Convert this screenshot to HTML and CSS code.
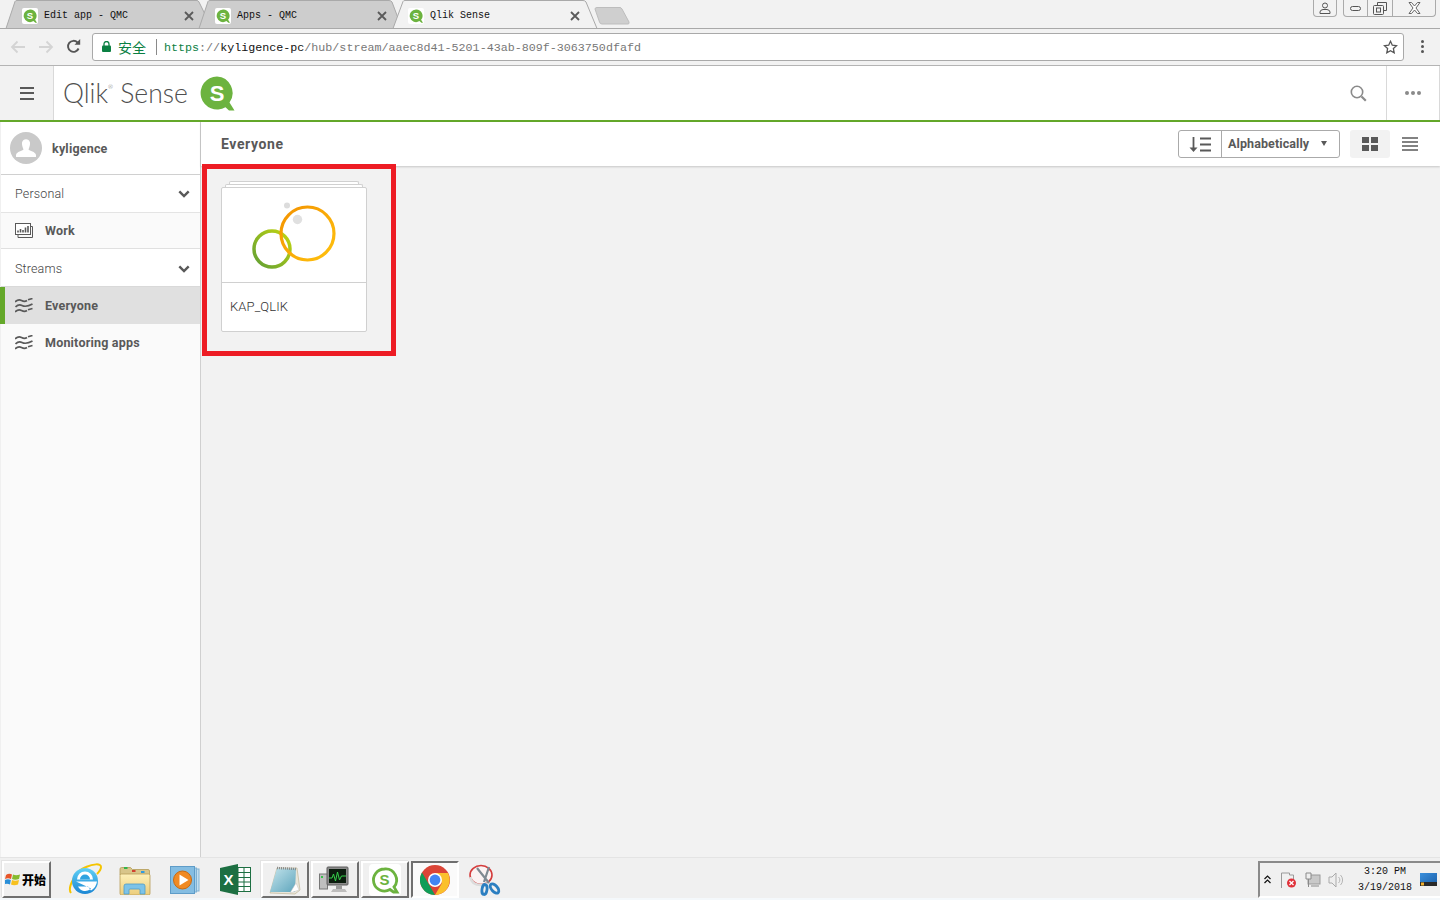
FILE: index.html
```html
<!DOCTYPE html>
<html lang="en">
<head>
<meta charset="utf-8">
<title>Qlik Sense</title>
<link rel="stylesheet" href="styles.css">
</head>
<body>
<svg class="sprite" aria-hidden="true">
  <defs>
    <symbol id="fav" viewBox="0 0 16 16">
      <rect width="16" height="16" rx="2" fill="#fff"/>
      <path d="M8 1.5a6.3 6.3 0 1 0 3.4 11.6l2 1.7h1.6l-1.9-3A6.3 6.3 0 0 0 8 1.5z" fill="#6cb33f"/>
      <text x="8" y="11" text-anchor="middle" class="fav-s">S</text>
    </symbol>
    <symbol id="close" viewBox="0 0 10 10">
      <path d="M1 1l8 8M9 1l-8 8" stroke="#5a5a5a" stroke-width="1.8" fill="none"/>
    </symbol>
    <symbol id="waves" viewBox="0 0 18 15">
      <path d="M0 4c2.500-2.500 4.500-2.500 6.500-1.500s4 1 5.500 0 M13 1.800l4.500-1.300 M.5 9c2.500-2.500 4.500-2.500 6.500-1.500s6 1 10.500-1.500 M0 14c2.500-2.500 4.500-2.500 6.500-1.500s4 1 5.500 0 M13 11.800l4.500-1.300" stroke="#595959" stroke-width="1.700" fill="none"/>
    </symbol>
    <symbol id="chev" viewBox="0 0 12 8">
      <path d="M1.300 1.300L6 6l4.700-4.700" stroke="#595959" stroke-width="2.400" fill="none"/>
    </symbol>
    <linearGradient id="greenring" x1="0" y1="1" x2="1" y2="0">
      <stop offset="0" stop-color="#5f9e35"/><stop offset="1" stop-color="#c3d60f"/>
    </linearGradient>
    <linearGradient id="orangering" x1="0" y1="0" x2="1" y2="1">
      <stop offset="0" stop-color="#f39200"/><stop offset="1" stop-color="#ffc20e"/>
    </linearGradient>
    <linearGradient id="ieblue" x1="0" y1="0" x2="0" y2="1">
      <stop offset="0" stop-color="#5fd0f5"/><stop offset="1" stop-color="#1b86d4"/>
    </linearGradient>
    <linearGradient id="folder" x1="0" y1="0" x2="0" y2="1">
      <stop offset="0" stop-color="#fdf0b8"/><stop offset="1" stop-color="#eccd7c"/>
    </linearGradient>
    <linearGradient id="pad" x1="0" y1="0" x2="1" y2="1">
      <stop offset="0" stop-color="#c4e4ec"/><stop offset="1" stop-color="#5fa6bd"/>
    </linearGradient>
    <linearGradient id="desk" x1="0" y1="0" x2="1" y2="1">
      <stop offset="0" stop-color="#3a8fdc"/><stop offset="1" stop-color="#1a5ea8"/>
    </linearGradient>
  </defs>
</svg>

<header class="tabstrip">
  <svg class="tabshapes" width="640" height="29" viewBox="0 0 640 29" aria-hidden="true">
    <path d="M6 28.500L15 1.500Q15.500.500 17 .500H197Q198 .500 199 2L212 28.500Z" fill="#cdcdcd" stroke="#a9a9a9"/>
    <path d="M199 28.500L208 1.500Q208.500.500 210 .500H389Q391 .500 392 2L402 28.500Z" fill="#cdcdcd" stroke="#a9a9a9"/>
    <path d="M393 28.500L403 1.500Q403.500.500 405 .500H583Q585 .500 586 2L597 28.500Z" fill="#f2f2f2" stroke="#a9a9a9"/>
    <path d="M595 9Q595 7.500 597 7.500H620Q621 7.500 622 9L629 22Q629.500 24 628 24H602Q600 24 599.500 22Z" fill="#cfcfcf" stroke="#bdbdbd"/>
  </svg>
  <div class="tab">
    <svg class="fav"><use href="#fav"/></svg>
    <span class="tab-title">Edit app - QMC</span>
    <svg class="tab-x"><use href="#close"/></svg>
  </div>
  <div class="tab">
    <svg class="fav"><use href="#fav"/></svg>
    <span class="tab-title">Apps - QMC</span>
    <svg class="tab-x"><use href="#close"/></svg>
  </div>
  <div class="tab">
    <svg class="fav"><use href="#fav"/></svg>
    <span class="tab-title">Qlik Sense</span>
    <svg class="tab-x"><use href="#close"/></svg>
  </div>
  <div class="winctl">
    <div class="winbtn winbtn-user">
      <svg width="12" height="12" viewBox="0 0 12 12"><circle cx="6" cy="3.500" r="2.500" fill="none" stroke="#555"/><path d="M1 11.500V10q0-2 3-2.500h4q3 .5 3 2.500v1.500z" fill="none" stroke="#555"/></svg>
    </div>
    <div class="wingroup">
      <div class="winbtn winbtn-min"><svg width="13" height="8" viewBox="0 0 13 8"><rect x="1.500" y="2.500" width="10" height="4" rx="2" fill="none" stroke="#555"/></svg></div>
      <div class="winbtn winbtn-max"><svg width="14" height="13" viewBox="0 0 14 13"><path d="M4.500 3V.5h9v8H11" fill="none" stroke="#555"/><rect x=".5" y="3.500" width="10" height="9" rx="1" fill="none" stroke="#555"/><rect x="3.500" y="6" width="4" height="4" fill="none" stroke="#555"/></svg></div>
      <div class="winbtn winbtn-close"><svg width="13" height="12" viewBox="0 0 13 12"><path d="M1 .5h2.500L6.500 4l3-3.500H12L8 6l4 5.500H9.500l-3-3.500-3 3.500H1L5 6z" fill="#fff" stroke="#666"/></svg></div>
    </div>
  </div>
</header>

<nav class="toolbar">
  <svg class="navicon" width="16" height="14" viewBox="0 0 16 14"><path d="M15 7H2M7.500 1.500L2 7l5.500 5.500" stroke="#d4d4d4" stroke-width="1.800" fill="none"/></svg>
  <svg class="navicon" width="16" height="14" viewBox="0 0 16 14"><path d="M1 7h13M8.500 1.500L14 7l-5.500 5.500" stroke="#d4d4d4" stroke-width="1.800" fill="none"/></svg>
  <svg class="navicon" width="15" height="15" viewBox="0 0 15 15"><path d="M12.600 9.500A5.500 5.500 0 1 1 11.500 3.500" stroke="#555" stroke-width="1.900" fill="none"/><path d="M8.500 5.800h5.700V0z" fill="#555"/></svg>
  <div class="addr">
    <svg class="lock" width="9" height="11" viewBox="0 0 9 11"><path d="M2 5V3a2.500 2.500 0 0 1 5 0v2" stroke="#0b8043" stroke-width="1.300" fill="none"/><rect y="4.500" width="9" height="6.500" rx="1" fill="#0b8043"/></svg>
    <span class="secure">安全</span>
    <span class="addr-sep"></span>
    <span class="url"><span class="url-https">https</span><span class="url-path">://</span><span class="url-host">kyligence-pc</span><span class="url-path">/hub/stream/aaec8d41-5201-43ab-809f-3063750dfafd</span></span>
    <svg class="star" width="15" height="14" viewBox="0 0 15 14"><path d="M7.500 1.300l1.800 3.900 4.200.5-3.100 2.900.8 4.200-3.700-2.100-3.700 2.100.8-4.200L1.500 5.700l4.200-.5z" fill="none" stroke="#555" stroke-width="1.300"/></svg>
  </div>
  <div class="kebab"><i></i><i></i><i></i></div>
</nav>

<header class="qs-header">
  <div class="burger"><i></i><i></i><i></i></div>
  <div class="logo">
    <span class="logo-text">Qlik<sup class="reg">®</sup> Sense</span>
    <svg class="logo-mark" width="35" height="35" viewBox="0 0 35 35">
      <path d="M17 .5a16.500 16.500 0 1 0 8.500 30.700l3.500 3.300h5.500l-5-8A16.500 16.500 0 0 0 17 .5z" fill="#6cb33f"/>
      <text x="17" y="24.500" text-anchor="middle" class="logo-s">S</text>
    </svg>
  </div>
  <div class="qs-right">
    <svg class="qs-search" width="17" height="17" viewBox="0 0 17 17"><circle cx="7" cy="7" r="5.700" fill="none" stroke="#8a8a8a" stroke-width="1.600"/><path d="M11.500 11.500l4.300 4.300" stroke="#8a8a8a" stroke-width="2.200"/></svg>
    <div class="qs-more"><i></i><i></i><i></i></div>
  </div>
</header>

<div class="main">
  <aside class="sidebar">
    <div class="user">
      <svg class="avatar" width="32" height="32" viewBox="0 0 32 32"><circle cx="16" cy="16" r="16" fill="#c9c9c9"/><path d="M12 10.500a4.300 5 0 0 1 8 0c.3 3-1 5.500-1.500 7 1 1.500 7 2 7.500 5.500v2H6v-2c.5-3.500 6.500-4 7.500-5.500-.5-1.500-1.800-4-1.500-7z" fill="#fff"/></svg>
      <span class="user-name">kyligence</span>
    </div>
    <div class="sec sec-personal"><span>Personal</span><svg class="chev"><use href="#chev"/></svg></div>
    <div class="item item-work">
      <svg class="item-icon" width="18" height="15" viewBox="0 0 18 15"><path d="M15.500 3.500h2v11H3V11.500" fill="none" stroke="#595959"/><rect x=".5" y=".5" width="15" height="11" fill="#fff" stroke="#595959"/><path d="M3 9.500V7.500M5.500 9.500V6M8 9.500V7M10.500 9.500V4.500M13 9.500V3" stroke="#595959" stroke-width="1.600"/></svg>
      <span>Work</span>
    </div>
    <div class="sec sec-streams"><span>Streams</span><svg class="chev"><use href="#chev"/></svg></div>
    <div class="item item-active"><svg class="item-icon wave"><use href="#waves"/></svg><span>Everyone</span></div>
    <div class="item"><svg class="item-icon wave"><use href="#waves"/></svg><span>Monitoring apps</span></div>
  </aside>

  <main class="content">
    <div class="content-head">
      <h1 class="content-title">Everyone</h1>
      <div class="sortbox">
        <div class="sort-icon">
          <svg width="22" height="15" viewBox="0 0 22 15"><path d="M4.500 0v12" stroke="#595959" stroke-width="1.800"/><path d="M.5 10.500h8L4.500 15z" fill="#595959"/><path d="M11 1.500h11M11 7.500h11M11 13.500h11" stroke="#595959" stroke-width="1.800"/></svg>
        </div>
        <div class="sort-label"><span>Alphabetically</span><i class="caret"></i></div>
      </div>
      <div class="view-btn view-btn-on">
        <svg width="16" height="14" viewBox="0 0 16 14"><path d="M0 0h7v6H0zM9 0h7v6H9zM0 8h7v6H0zM9 8h7v6H9z" fill="#595959"/></svg>
      </div>
      <div class="view-btn">
        <svg width="16" height="14" viewBox="0 0 16 14"><path d="M0 1h16M0 5h16M0 9h16M0 13h16" stroke="#595959" stroke-width="1.700"/></svg>
      </div>
    </div>
    <div class="cards">
      <div class="stack stack-back"></div>
      <div class="stack stack-mid"></div>
      <article class="card">
        <div class="card-thumb">
          <svg width="144" height="94" viewBox="0 0 144 94">
            <circle cx="65" cy="17.500" r="3" fill="#dcdcdc"/>
            <circle cx="75.500" cy="31.500" r="4.700" fill="#e0e0e0"/>
            <circle cx="50" cy="61" r="18" fill="none" stroke="url(#greenring)" stroke-width="3.500"/>
            <circle cx="85.500" cy="45.500" r="26.500" fill="none" stroke="url(#orangering)" stroke-width="3.200"/>
          </svg>
        </div>
        <div class="card-name">KAP_QLIK</div>
      </article>
    </div>
    <div class="redbox"></div>
  </main>
</div>

<footer class="taskbar">
  <div class="start raised">
    <svg width="16" height="15" viewBox="0 0 16 15"><path d="M1 3q3-2 6-.5L6 7Q3 5.500 0 7z" fill="#e8562a"/><path d="M8 2.500q3 1.500 7 0L14 7q-4 1.500-7 0z" fill="#86bb2e"/><path d="M0 8q3-1.500 5.800 0L5 12.500Q2 11-1 12.500z" fill="#2a8fd8"/><path d="M7 8q3 1.500 7 0l-1 4.500q-4 1.500-7 0z" fill="#f7c11f"/></svg>
    <span>开始</span>
  </div>
  <div class="tb-btn first">
    <svg width="34" height="34" viewBox="0 0 34 34">
      <path d="M3 30C-1 25 8 7 18 4c7-3 15-4 15 0 0 2-2 5-4 7" fill="none" stroke="#f5c400" stroke-width="2"/>
      <circle cx="17" cy="18" r="13" fill="url(#ieblue)"/>
      <path d="M9 16.500h16a8 8 0 0 0-16 0z" fill="#fff"/>
      <path d="M8 18.500h21a12.500 12.500 0 0 1-6 9l-3-4h5H10a8 8 0 0 0 13 2z" fill="#fff"/>
      <path d="M12 16.500a5 5 0 0 1 10 0z" fill="#2ea3e0"/>
    </svg>
  </div>
  <div class="tb-btn">
    <svg width="32" height="30" viewBox="0 0 32 30">
      <path d="M1 4q0-1.500 1.500-1.500h9l2 2H29q1.500 0 1.500 1.500v4H1z" fill="#d8c58a" stroke="#b39a55" stroke-width=".8"/>
      <rect x="5" y="2" width="3.500" height="2" fill="#31b34a"/><rect x="13" y="5" width="3.500" height="2" fill="#d2412f"/><rect x="22" y="6" width="3.500" height="2" fill="#2f9be0"/>
      <rect x="1" y="9" width="30" height="21" rx="1.500" fill="url(#folder)" stroke="#b89d58" stroke-width=".8"/>
      <path d="M5 29v-8q0-2 2-2h17q2 0 2 2v8h-5v-4q0-1-1-1h-9q-1 0-1 1v4z" fill="#7cc3e8" stroke="#4e9cc7" stroke-width=".8"/>
    </svg>
  </div>
  <div class="tb-btn">
    <svg width="30" height="28" viewBox="0 0 30 28">
      <rect x="6" y="3" width="23" height="22" fill="#c3dff1" stroke="#7fb1d2"/>
      <rect x="3.500" y="2" width="23" height="24" fill="#a7d0ea" stroke="#7fb1d2"/>
      <rect x=".5" y=".5" width="24" height="27" fill="#84bde2" stroke="#5e9cc8"/>
      <circle cx="12.500" cy="14" r="9" fill="#f08a24" stroke="#c96a10"/>
      <path d="M9.500 8.500l9 5.500-9 5.500z" fill="#fff"/>
    </svg>
  </div>
  <div class="tb-btn">
    <svg width="31" height="31" viewBox="0 0 31 31">
      <path d="M0 4l18-4v31L0 27z" fill="#1d6f42"/>
      <rect x="18" y="3.500" width="12.500" height="24" fill="#fff" stroke="#1d6f42"/>
      <path d="M18 8.500h12M18 13.500h12M18 18h12M18 22.500h12M24 4v23" stroke="#1d6f42"/>
      <text x="8.500" y="21" text-anchor="middle" class="xl-x">X</text>
    </svg>
  </div>
  <div class="tb-btn raised tb-narrow">
    <svg width="32" height="30" viewBox="0 0 32 30">
      <path d="M8 3h20l3 22-5 4-25-1z" fill="#e9e6da" stroke="#b5ac8c" stroke-width=".6"/>
      <path d="M8 3.500h19L26 27H1z" fill="url(#pad)"/>
      <path d="M8 3l19 1" stroke="#8b8b8b" stroke-width="2.400" stroke-dasharray="1 1"/>
      <path d="M21 28l6-10 3 7z" fill="#fff" stroke="#c4c4c4" stroke-width=".5"/>
    </svg>
  </div>
  <div class="tb-btn raised tb-narrow">
    <svg width="32" height="30" viewBox="0 0 32 30">
      <rect x=".5" y="9" width="8" height="15" fill="#bfbfbf" stroke="#777"/>
      <rect x="2" y="11" width="2" height="2" fill="#36c24a"/>
      <rect x="8" y="2" width="21" height="18" rx="1" fill="#8c8c8c" stroke="#5c5c5c"/>
      <rect x="10" y="4" width="17" height="14" fill="#0b1c0e"/>
      <path d="M10 13h3l1.500-4 2 7 2-9 2 8 2-4h4.500" stroke="#35d04a" fill="none"/>
      <path d="M14 24h12l2 3H12z" fill="#bdbdbd"/><rect x="17" y="20" width="6" height="4" fill="#9a9a9a"/>
    </svg>
  </div>
  <div class="tb-btn raised tb-narrow">
    <svg class="tb-qlik" width="32" height="32" viewBox="0 0 32 32">
      <rect width="32" height="32" rx="4" fill="#fff"/>
      <path d="M15.500 5a11 11 0 1 0 5.500 20.500l3.500 2.500h3.500l-3-5A11 11 0 0 0 15.500 5z" fill="none" stroke="#6cb33f" stroke-width="2.800"/>
      <text x="15.500" y="21" text-anchor="middle" class="tb-s">S</text>
    </svg>
  </div>
  <div class="tb-btn pressed tb-narrow">
    <svg width="30" height="30" viewBox="0 0 30 30">
      <circle cx="15" cy="15" r="15" fill="#db4437"/>
      <path d="M15 30A15 15 0 0 1 2 7.500L9 19.500z" fill="#0f9d58"/>
      <path d="M15 8h13a15 15 0 0 1-13 22l7-12z" fill="#fbc02d"/>
      <circle cx="15" cy="15" r="7" fill="#fff"/>
      <circle cx="15" cy="15" r="5.400" fill="#4285f4"/>
    </svg>
  </div>
  <div class="tb-btn">
    <svg width="32" height="32" viewBox="0 0 32 32">
      <ellipse cx="12" cy="11" rx="11" ry="9.500" fill="#fbf3f3" stroke="#d43c3c" stroke-width="1.600"/>
      <path d="M1.500 13q1 8 10.500 8 4 0 7-2" fill="none" stroke="#dcdcdc" stroke-width="2.500"/>
      <path d="M8 4l12 15M20 3L15 18" stroke="#7f8a92" stroke-width="2.200"/>
      <ellipse cx="25.500" cy="24.500" rx="3" ry="5.500" transform="rotate(-42 25.500 24.500)" fill="none" stroke="#2c7fc1" stroke-width="2.800"/>
      <ellipse cx="15.500" cy="25.500" rx="2.500" ry="5" transform="rotate(8 15.500 25.500)" fill="none" stroke="#2c7fc1" stroke-width="2.800"/>
    </svg>
  </div>
  <div class="tray">
    <svg class="tray-chev" width="7" height="9" viewBox="0 0 7 9"><path d="M.5 4L3.500 1l3 3M.5 8l3-3 3 3" fill="none" stroke="#111" stroke-width="1.200"/></svg>
    <svg class="tray-ic" width="17" height="16" viewBox="0 0 17 16"><path d="M1.500 16V1h8v2h4v6" fill="none" stroke="#9a9a9a"/><circle cx="11.500" cy="11" r="4.500" fill="#e0313a"/><path d="M9.500 9l4 4M13.500 9l-4 4" stroke="#fff" stroke-width="1.300"/></svg>
    <svg class="tray-ic" width="17" height="16" viewBox="0 0 17 16"><rect x="4" y="3" width="12" height="9" fill="#c9c9c9" stroke="#9a9a9a"/><path d="M2 1h5v6H2zM4.500 7v8M7 14h8" fill="#eee" stroke="#8a8a8a"/></svg>
    <svg class="tray-ic" width="17" height="16" viewBox="0 0 17 16"><path d="M1 5h3l4-4v14l-4-4H1z" fill="#eee" stroke="#aaa"/><path d="M10.500 5a4 4 0 0 1 0 6M12.500 3a7 7 0 0 1 0 10" fill="none" stroke="#b5b5b5"/></svg>
    <div class="clock"><span>3:20 PM</span><span>3/19/2018</span></div>
    <svg class="tray-desk" width="17" height="13" viewBox="0 0 17 13"><rect width="17" height="13" fill="url(#desk)"/><rect y="9" width="17" height="4" fill="#2a2a2a"/><rect x="1" y="9.500" width="3" height="3" fill="#f0b030"/></svg>
  </div>
</footer>
</body>
</html>
```

FILE: styles.css
```css
* { box-sizing: border-box; }
html, body { margin: 0; padding: 0; height: 100%; }
body {
  display: flex;
  flex-direction: column;
  height: 100vh;
  overflow: hidden;
  background: #f2f2f2;
  font-family: Roboto, "Liberation Sans", sans-serif;
  color: #595959;
}
.sprite { position: absolute; width: 0; height: 0; }
.fav-s { font: 700 9.500px "Liberation Sans", sans-serif; fill: #fff; }
.logo-s { font: 700 22px "Liberation Sans", sans-serif; fill: #fff; }
.xl-x { font: 700 15px "Liberation Sans", sans-serif; fill: #fff; }
.tb-s { font: 700 15px "Liberation Sans", sans-serif; fill: #6cb33f; }

/* Browser tab strip */
.tabstrip {
  position: relative;
  display: flex;
  flex: 0 0 29px;
  height: 29px;
  padding-left: 22px;
  background: #f2f2f2;
  border-bottom: 1px solid #a9a9a9;
}
.tabshapes { position: absolute; left: 0; top: 0; }
.tab {
  position: relative;
  display: flex;
  align-items: center;
  width: 193px;
  height: 28px;
  padding-top: 3px;
  font: 10px "Liberation Mono", "DejaVu Sans Mono", monospace;
  color: #111;
}
.fav { width: 16px; height: 16px; flex: none; margin-right: 6px; }
.tab-title { flex: 1; white-space: pre; }
.tab-x { width: 10px; height: 10px; flex: none; margin-right: 21px; }
.winctl {
  position: relative;
  display: flex;
  align-items: flex-start;
  gap: 6px;
  margin-left: auto;
  margin-right: 4px;
}
.winbtn {
  display: flex;
  align-items: center;
  justify-content: center;
  height: 17px;
  border: 1px solid #aaa;
  border-top: 0;
}
.winbtn-user { width: 24px; border-radius: 0 0 4px 4px; }
.wingroup { display: flex; }
.winbtn-min { width: 25px; border-radius: 0 0 0 4px; }
.winbtn-max { width: 25px; border-left: 0; }
.winbtn-close { width: 43px; border-left: 0; border-radius: 0 0 4px 0; }

/* Browser toolbar */
.toolbar {
  display: flex;
  align-items: center;
  flex: 0 0 37px;
  height: 37px;
  padding: 0 0 1px 10px;
  background: #f2f2f2;
  border-bottom: 1px solid #b4b4b4;
}
.navicon { flex: none; margin-right: 12px; }
.navicon:nth-child(3) { margin-right: 11px; }
.addr {
  display: flex;
  align-items: center;
  flex: 0 0 1312px;
  height: 28px;
  padding-left: 9px;
  background: #fff;
  border: 1px solid #a9a9a9;
  border-radius: 3px;
}
.lock { flex: none; margin-right: 7px; }
.secure { font: 14px "Noto Sans CJK SC", sans-serif; color: #0b8043; line-height: 1; }
.addr-sep { width: 1px; height: 16px; margin: 0 7px 0 10px; background: #8a8a8a; }
.url { flex: 1; padding-top: 2px; font: 11.700px "Liberation Mono", "DejaVu Sans Mono", monospace; white-space: nowrap; }
.url-https { color: #0b8043; }
.url-path { color: #777; }
.url-host { color: #111; }
.star { flex: none; margin-right: 5px; }
.kebab { display: flex; flex-direction: column; gap: 2px; margin-left: 17px; }
.kebab i { display: block; width: 3px; height: 3px; background: #555; border-radius: 50%; }

/* Qlik header */
.qs-header {
  display: flex;
  align-items: stretch;
  flex: 0 0 56px;
  height: 56px;
  background: #fff;
  border-bottom: 2px solid #64a82a;
}
.burger {
  display: flex;
  flex-direction: column;
  align-items: center;
  justify-content: center;
  gap: 3.500px;
  width: 54px;
  background: #f2f2f2;
  border-right: 1px solid #d9d9d9;
}
.burger i { display: block; width: 14px; height: 2px; background: #595959; }
.logo { display: flex; align-items: center; padding-left: 9px; }
.logo-text { font: 300 26.500px Lato, Roboto, sans-serif; color: #4f4f4f; white-space: pre; }
.reg { font-size: 6px; vertical-align: 14px; line-height: 0; }
.logo-mark { margin-left: 12px; margin-top: 1px; }
.qs-right { display: flex; align-items: center; margin-left: auto; }
.qs-search { margin-right: 19px; }
.qs-more {
  display: flex;
  align-items: center;
  justify-content: center;
  gap: 2px;
  width: 54px;
  height: 100%;
  border-left: 1px solid #d9d9d9;
  border-right: 1px solid #d9d9d9;
}
.qs-more i { display: block; width: 4px; height: 4px; background: #8a8a8a; border-radius: 50%; }

/* Main */
.main { display: flex; flex: 1; min-height: 0; }
.sidebar {
  flex: 0 0 201px;
  background: #fafafa;
  border-right: 1px solid #d0d0d0;
  border-left: 1px solid #f0f0f0;
}
.user {
  display: flex;
  align-items: center;
  height: 53px;
  padding-left: 9px;
  background: #fff;
  border-bottom: 1px solid #d0d0d0;
}
.avatar { flex: none; margin-right: 10px; }
.user-name { font-size: 12.500px; font-weight: 700; letter-spacing: .2px; }
.sec {
  display: flex;
  align-items: center;
  justify-content: space-between;
  padding: 0 10px 0 14px;
  background: #fff;
  font-size: 12.500px;
  letter-spacing: .15px;
  font-weight: 300;
  color: #444;
}
.sec-personal { height: 38px; border-bottom: 1px solid #e4e4e4; }
.sec-streams { height: 38px; padding-top: 2px; border-bottom: 1px solid #d9d9d9; }
.chev { width: 12px; height: 8px; }
.item {
  display: flex;
  align-items: center;
  height: 37px;
  padding-left: 14px;
  font-size: 12.500px;
  font-weight: 700;
  letter-spacing: .2px;
}
.item-work { height: 36px; border-bottom: 1px solid #e0e0e0; }
.item-icon { flex: none; width: 18px; height: 15px; margin-right: 12px; }
.item-active {
  padding-left: 9px;
  background: #e0e0e0;
  border-left: 5px solid #64a82a;
  margin-left: -1px;
}
.item-active .item-icon { margin-left: 1px; }

/* Content */
.content { position: relative; flex: 1; min-width: 0; background: #f2f2f2; }
.content-head {
  display: flex;
  align-items: center;
  height: 44px;
  padding: 0 10px 0 20px;
  background: #fff;
  box-shadow: 0 1px 2px rgba(0, 0, 0, .18);
}
.content-title { margin: 0 auto 0 0; font-size: 14px; font-weight: 700; letter-spacing: .6px; color: #595959; }
.sortbox {
  display: flex;
  height: 28px;
  margin-right: 10px;
  border: 1px solid #aaa;
  border-radius: 3px;
  background: #fff;
}
.sort-icon {
  display: flex;
  align-items: center;
  justify-content: center;
  width: 43px;
  border-right: 1px solid #aaa;
}
.sort-label {
  display: flex;
  align-items: center;
  width: 117px;
  padding: 0 0 1px 6px;
  font-size: 12.500px;
  font-weight: 700;
  letter-spacing: .1px;
}
.caret {
  width: 0;
  height: 0;
  margin-left: 12px;
  border: 3.500px solid transparent;
  border-top: 5px solid #595959;
  border-bottom: 0;
}
.view-btn {
  display: flex;
  align-items: center;
  justify-content: center;
  width: 40px;
  height: 28px;
  border-radius: 3px;
}
.view-btn-on { background: #f2f2f2; }
.cards { padding: 15px 0 0 20px; width: 166px; }
.stack { height: 3px; background: #fff; border: 1px solid #d0d0d0; border-bottom: 0; border-radius: 2px 2px 0 0; }
.stack-back { margin: 0 8px; }
.stack-mid { margin: 0 4px; }
.card { width: 146px; height: 145px; background: #fff; border: 1px solid #d0d0d0; border-radius: 2px; }
.card-thumb { height: 95px; border-bottom: 1px solid #d0d0d0; }
.card-thumb svg { display: block; }
.card-name { padding: 16px 8px 0; font-size: 13px; font-weight: 300; letter-spacing: .1px; color: #333; }
.redbox {
  position: absolute;
  left: 1px;
  top: 42px;
  width: 194px;
  height: 192px;
  border: 5px solid #ed1c24;
}

/* Taskbar */
.taskbar {
  display: flex;
  align-items: flex-start;
  flex: 0 0 43px;
  height: 43px;
  padding: 3px 0 0 2px;
  background: #f0f0f0;
  border-top: 1px solid #e4e4e4;
  border-bottom: 2px solid #f4f8fb;
}
.raised {
  background: #f0f0f0;
  border: 2px solid;
  border-color: #fff #6f6f6f #6f6f6f #fff;
  box-shadow: -1px -1px 0 #e3e3e3;
}
.pressed {
  background: #fafafa;
  border: 2px solid;
  border-color: #6f6f6f #fff #fff #6f6f6f;
}
.start {
  display: flex;
  align-items: center;
  gap: 1px;
  width: 49px;
  height: 37px;
  margin-right: 9px;
  padding-left: 1px;
  font: 900 12px "Noto Sans CJK SC", sans-serif;
  color: #000;
}
.tb-btn {
  display: flex;
  align-items: center;
  justify-content: center;
  width: 50px;
  height: 37px;
}
.tb-narrow { width: 48px; margin: 0 1px; }
.tray {
  display: flex;
  align-items: center;
  width: 182px;
  height: 37px;
  margin-left: auto;
  padding-left: 4px;
  background: #f0f0f0;
  border: 2px solid;
  border-color: #8a8a8a #fff #fff #8a8a8a;
  border-right: 0;
}
.tray-chev { margin-right: 9px; }
.tray-ic { margin-right: 7px; }
.clock {
  display: flex;
  flex-direction: column;
  align-items: center;
  gap: 5px;
  width: 60px;
  margin-left: 3px;
  font: 10px/11px "Liberation Mono", monospace;
  color: #111;
}
.tray-desk { margin-left: 5px; }
```
